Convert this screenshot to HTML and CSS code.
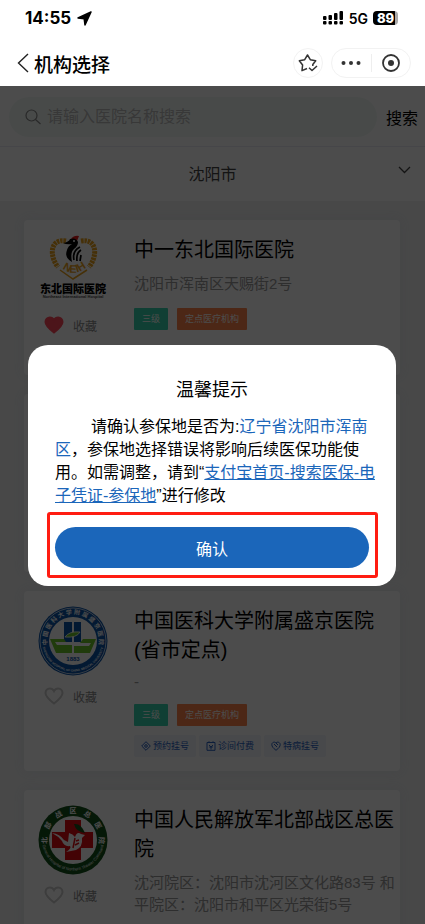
FILE: index.html
```
<!DOCTYPE html>
<html lang="zh-CN">
<head>
    <meta charset="UTF-8">
    <meta name="viewport" content="width=device-width, initial-scale=1.0">
    <title>机构选择</title>
    <link rel="stylesheet" href="styles.css">
</head>
<body>

    <!-- shared icons -->
    <svg class="sprite" aria-hidden="true">
        <symbol id="heart" viewBox="0 0 20 18">
            <path d="M10 16.5C5.500 13 1.500 9.500 1.500 6C1.500 3.300 3.500 1.500 5.800 1.500C7.600 1.500 9.200 2.500 10 4C10.800 2.500 12.400 1.500 14.200 1.500C16.500 1.500 18.500 3.300 18.500 6C18.500 9.500 14.500 13 10 16.500Z"/>
        </symbol>
    </svg>

    <header class="header">
        <div class="status-bar">
            <span class="time">14:55</span>
            <svg class="location" width="15" height="15" viewBox="0 0 15 15"><path d="M14 1L1 7L7.200 7.800L8 14Z" stroke="#000" stroke-width="1.500" stroke-linejoin="round"/></svg>
            <svg class="signal" width="20" height="14" viewBox="0 0 20 14">
                <g fill="#000">
                    <rect x="0" y="5" width="3.500" height="4" rx="1"/><rect x="0" y="10" width="3.500" height="3.500" rx="1"/>
                    <rect x="5.500" y="4" width="3.500" height="5" rx="1"/><rect x="5.500" y="10" width="3.500" height="3.500" rx="1"/>
                    <rect x="11" y="2" width="3.500" height="7" rx="1"/><rect x="11" y="10" width="3.500" height="3.500" rx="1"/>
                    <rect x="16.500" y="0" width="3.500" height="9" rx="1"/><rect x="16.500" y="10" width="3.500" height="3.500" rx="1"/>
                </g>
            </svg>
            <span class="network">5G</span>
            <span class="battery">89</span>
        </div>
        <nav class="nav-bar">
            <button class="back" type="button" aria-label="返回">
                <svg width="12" height="20" viewBox="0 0 12 20"><path d="M11 1L1.500 10L11 19" fill="none" stroke="#222" stroke-width="1.400"/></svg>
            </button>
            <h1>机构选择</h1>
            <button class="star" type="button" aria-label="收藏小程序">
                <svg width="20" height="20" viewBox="0 0 20 20" fill="none" stroke="#333" stroke-width="1.500" stroke-linejoin="round">
                    <path d="M9 15.500L4 17.600L4.600 12L1.300 7.800L6.700 6.700L9.500 2L12.300 6.700L17.700 7.800L14.800 11.500V13"/>
                    <path d="M11 14.800L14 17.500L19 13"/>
                </svg>
            </button>
            <div class="capsule">
                <button type="button" aria-label="更多">
                    <svg width="20" height="6" viewBox="0 0 20 6" fill="#333"><circle cx="2.500" cy="3" r="2"/><circle cx="10" cy="3" r="2"/><circle cx="17.500" cy="3" r="2"/></svg>
                </button>
                <button type="button" aria-label="关闭">
                    <svg width="18" height="18" viewBox="0 0 18 18"><circle cx="9" cy="9" r="8" fill="none" stroke="#333" stroke-width="1.800"/><circle cx="9" cy="9" r="3" fill="#333"/></svg>
                </button>
            </div>
        </nav>
    </header>

    <form class="search">
        <label class="search-box">
            <svg width="16" height="16" viewBox="0 0 16 16" fill="none" stroke="#888" stroke-width="1.200"><circle cx="6.500" cy="6.500" r="5.500"/><path d="M10.500 10.500L15.500 15"/></svg>
            <input type="text" placeholder="请输入医院名称搜索" aria-label="医院名称">
        </label>
        <button type="button">搜索</button>
    </form>

    <button class="city" type="button">
        <span>沈阳市</span>
        <svg width="13" height="8" viewBox="0 0 13 8"><path d="M1 1L6.500 6.500L12 1" fill="none" stroke="#444" stroke-width="1.300"/></svg>
    </button>

    <main class="list">
        <article class="card">
            <div class="side">
                <svg class="logo" viewBox="0 0 70 70">
                    <g fill="none" stroke="#e9a11c" stroke-width="5" stroke-dasharray="2.500 .8">
                        <path d="M28 6C12 3 11 21 20 32"/>
                        <path d="M43 6C59 3 60 21 51 32"/>
                    </g>
                    <path d="M22 35L35 44L49 35" fill="none" stroke="#e9a11c" stroke-width="1.500"/>
                    <path id="neih" d="M20 29Q35 47 53 28" fill="none"/>
                    <text font-size="11" font-weight="700" fill="#e9a11c" text-anchor="middle"><textPath href="#neih" startOffset="50%">NEIH</textPath></text>
                    <path d="M33 4Q36 0 41 1L39 6Z" fill="#e31919"/>
                    <path d="M25 8Q31 7 32 4Q38 2 40 7Q40 11 36 14Q32 17 34 27Q26 23 29 15Q30 11 34 9Q29 10 25 8Z"/>
                    <path d="M42 12Q34 16 36 25M43 15Q38 18 39 26M43 20L42 26" fill="none" stroke="#000" stroke-width="1.700"/>
                    <circle cx="36" cy="6" r="1" fill="#fff"/>
                    <text x="35" y="58" text-anchor="middle" font-size="11" font-weight="900">东北国际医院</text>
                    <text x="35" y="63" text-anchor="middle" font-size="4" font-weight="700" fill="#444">Northeast International Hospital</text>
                </svg>
                <button class="favorite active" type="button"><svg><use href="#heart"/></svg>收藏</button>
            </div>
            <div class="info">
                <h2>中一东北国际医院</h2>
                <p class="address">沈阳市浑南区天赐街2号</p>
                <div class="tags"><span class="level">三级</span><span class="insured">定点医疗机构</span></div>
                <div class="services"></div>
            </div>
        </article>

        <article class="card"></article>

        <article class="card">
            <div class="side">
                <svg class="logo" viewBox="0 0 70 70">
                    <circle cx="35" cy="35" r="34.500" fill="#0c54a8"/>
                    <circle cx="35" cy="35" r="33" fill="none" stroke="#fff" stroke-width=".7"/>
                    <circle cx="35" cy="35" r="24" fill="#fff"/>
                    <path id="ring-top" d="M10.500 43A26 26 0 1 1 59.500 43" fill="none"/>
                    <path id="ring-bottom" d="M4.500 40A31 31 0 0 0 65.500 40" fill="none"/>
                    <text font-size="6" font-weight="700" fill="#fff" text-anchor="middle"><textPath href="#ring-top" startOffset="50%">中 国 医 科 大 学 附 属 盛 京 医 院</textPath></text>
                    <g font-size="3" font-weight="700" fill="#fff" text-anchor="middle">
                        <text><textPath href="#ring-bottom" startOffset="21%">SHENGJING HOSPITAL</textPath></text>
                        <text><textPath href="#ring-bottom" startOffset="50%">OF CHINA</textPath></text>
                        <text><textPath href="#ring-bottom" startOffset="79%">MEDICAL UNIVERSITY</textPath></text>
                    </g>
                    <path d="M26 16H34V36H26ZM36 16H43V36H36Z" fill="#0c54a8"/>
                    <path d="M27 31Q31 25 42 26Q39 32 27 31Z" fill="#6dc52b" stroke="#fff" stroke-width=".8"/>
                    <path d="M12 33H26L28 36H17L19 39H34V47H18ZM58 33H45L42 37H53L51 40H36V47H52Z" fill="#6dc52b"/>
                    <text x="35" y="55" text-anchor="middle" font-size="6" font-weight="700" fill="#0c54a8">1883</text>
                </svg>
                <button class="favorite" type="button"><svg><use href="#heart"/></svg>收藏</button>
            </div>
            <div class="info">
                <h2>中国医科大学附属盛京医院(省市定点)</h2>
                <p class="address empty">-</p>
                <div class="tags"><span class="level">三级</span><span class="insured">定点医疗机构</span></div>
                <div class="services">
                    <a href="#"><svg viewBox="0 0 10 10"><path d="M5 .7L9.300 5L5 9.300L.7 5Z"/><circle cx="5" cy="5" r="1.300"/></svg>预约挂号</a>
                    <a href="#"><svg viewBox="0 0 10 10"><path d="M1 1.500H9V9.300H1ZM3 .3V2M7 .3V2M3 4L5 6L7 4M5 6V8.500M3.200 6H6.800"/></svg>诊间付费</a>
                    <a href="#"><svg viewBox="0 0 10 10"><path d="M5 9.300C2 7 .8 5.500 .8 3.500C.8 1.500 3.500 .2 5 2C6.500 .2 9.200 1.500 9.200 3.500C9.200 5.500 8 7 5 9.300ZM3 3L6 6M5 2L7 4"/></svg>特病挂号</a>
                </div>
            </div>
        </article>

        <article class="card">
            <div class="side">
                <svg class="logo" viewBox="0 0 70 70">
                    <circle cx="35" cy="35" r="34.500" fill="#12501a"/>
                    <circle cx="35" cy="35" r="24" fill="#fff"/>
                    <path id="north-top" d="M9.500 39A26 26 0 1 1 60.500 39" fill="none"/>
                    <path id="north-bottom" d="M4.500 40A31 31 0 0 0 65.500 40" fill="none"/>
                    <text font-size="7" font-weight="700" fill="#fff" text-anchor="middle"><textPath href="#north-top" startOffset="50%">北　部　战　区　总　医　院</textPath></text>
                    <text font-size="4" fill="#fff" text-anchor="middle"><textPath href="#north-bottom" startOffset="50%">General Hospital of Northern Theater Command</textPath></text>
                    <path d="M27 15H43V27H55V43H43V55H27V43H14V27H27Z" fill="#e00a12"/>
                    <path d="M14 28Q22 29 26 35L30 37L31 28Q35 29 37 32Q39 26 43 29L47 30L44 33Q45 42 38 45L28 47Q34 43 32 41Q26 42 24 36Q20 31 14 28Z" fill="#fff"/>
                    <path d="M37 33L35 43M38 36L41 35M37 40L41 38" fill="none" stroke="#e00a12" stroke-width="1.500"/>
                    <path d="M36 19Q43 18 47 28Q38 27 36 19Z" fill="#12501a"/>
                </svg>
                <button class="favorite" type="button"><svg><use href="#heart"/></svg>收藏</button>
            </div>
            <div class="info">
                <h2>中国人民解放军北部战区总医院</h2>
                <p class="address">沈河院区：沈阳市沈河区文化路83号 和平院区：沈阳市和平区光荣街5号</p>
            </div>
        </article>
    </main>

    <div class="mask">
        <section class="dialog" role="dialog" aria-labelledby="dialog-title">
            <h2 id="dialog-title">温馨提示</h2>
            <p>请确认参保地是否为:<span>辽宁省沈阳市浑南<br>区</span>，参保地选择错误将影响后续医保功能使<br>用。如需调整，请到“<a href="#">支付宝首页-搜索医保-电<br>子凭证-参保地</a>”进行修改</p>
            <div class="highlight">
                <button type="button">确认</button>
            </div>
        </section>
    </div>

</body>
</html>
```
FILE: styles.css
```
* {
    box-sizing: border-box;
}
body {
    margin: 0;
    height: 100vh;
    overflow: hidden;
    background-color: #f0f0f0;
    color: #000;
    font-family: "Liberation Sans", "Noto Sans CJK SC", sans-serif;
}
h1, h2, p {
    margin: 0;
    font-weight: 400;
}
button {
    padding: 0;
    border: none;
    background: none;
    color: inherit;
    font-family: inherit;
    cursor: pointer;
}
svg {
    display: block;
    flex-shrink: 0;
}
.sprite {
    position: absolute;
    width: 0;
    height: 0;
}

/* header */
.header {
    position: relative;
    z-index: 2;
    height: 86px;
    background-color: #fff;
}
.status-bar {
    display: flex;
    align-items: center;
    height: 36px;
    padding: 0 27px 0 25px;
    font-family: Inter, sans-serif;
}
.time {
    font-size: 17px;
    font-weight: 700;
}
.location {
    margin-left: 6px;
}
.signal {
    margin-left: auto;
}
.network {
    margin: 0 5px 0 6px;
    font-size: 14px;
    font-weight: 600;
}
.battery {
    width: 25px;
    border-radius: 4px;
    background: linear-gradient(90deg, #000 89%, #aaa 89%);
    color: #fff;
    font-size: 13px;
    font-weight: 800;
    line-height: 14px;
    text-align: center;
}
.nav-bar {
    display: flex;
    align-items: center;
    height: 50px;
    padding: 4px 14px 0 17px;
}
.nav-bar h1 {
    margin: 0 auto 0 5px;
    font-size: 19px;
    font-weight: 500;
}
.star, .capsule {
    display: flex;
    align-items: center;
    justify-content: center;
    height: 30px;
    border: 1px solid #f2f2f2;
    border-radius: 15px;
}
.star {
    width: 30px;
    margin-right: 8px;
}
.capsule {
    width: 80px;
}
.capsule button {
    display: flex;
    flex: 1;
    align-items: center;
    justify-content: center;
    height: 18px;
}
.capsule button + button {
    border-left: 1px solid #eee;
}

/* search and city */
.search {
    display: flex;
    align-items: center;
    height: 61px;
    padding: 2px 7px 0 9px;
    border-bottom: 1px solid #eaeaf4;
    background-color: #fff;
}
.search-box {
    display: flex;
    flex: 1;
    align-items: center;
    gap: 6px;
    height: 40px;
    margin-right: 9px;
    padding: 0 16px;
    border-radius: 20px;
    background-color: #f2f9f6;
}
.search-box input {
    flex: 1;
    min-width: 0;
    padding: 0;
    border: none;
    outline: none;
    background: none;
    font-family: inherit;
    font-size: 16px;
}
.search-box input::placeholder {
    color: #bbb;
}
.search button {
    font-size: 16px;
}
.city {
    display: flex;
    align-items: center;
    width: 100%;
    height: 54px;
    padding: 0 14px 2px 27px;
    background-color: #fff;
    color: #444;
    font-size: 16px;
}
.city span {
    flex: 1;
}
.city svg {
    margin-bottom: 6px;
}

/* hospital list */
.list {
    display: flex;
    flex-direction: column;
    gap: 19px;
    padding: 19px 25px 19px 24px;
}
.card {
    display: flex;
    flex-shrink: 0;
    gap: 26px;
    min-height: 155px;
    padding: 15px 0 14px 14px;
    border-radius: 4px;
    background-color: #fff;
    box-shadow: 0 0 12px #e4ecee;
}
.card:empty {
    min-height: 178px;
}
.side {
    width: 70px;
}
.logo {
    width: 70px;
    height: 70px;
}
.favorite {
    display: flex;
    align-items: center;
    gap: 9px;
    height: 18px;
    margin: 11px 0 0 6px;
    color: #888;
    font-size: 12px;
}
.favorite svg {
    width: 20px;
    height: 18px;
    fill: none;
    stroke: #ccc;
    stroke-width: 2;
}
.favorite.active svg {
    fill: #ff4658;
    stroke: #ff4658;
}
.info {
    flex: 1;
    min-width: 0;
    padding-top: 1px;
}
.info h2 {
    font-size: 20px;
    line-height: 29px;
}
.address {
    margin-top: 8px;
    color: #999;
    font-size: 15px;
    line-height: 22px;
}
.address.empty {
    line-height: 18px;
}
.tags {
    display: flex;
    gap: 9px;
    margin-top: 13px;
    color: #fff;
    font-size: 9px;
    line-height: 22px;
}
.tags span {
    padding: 0 8px;
    border-radius: 1px;
}
.level {
    background-color: #37d3ad;
}
.insured {
    background-color: #ff834a;
}
.services {
    display: flex;
    gap: 3px;
    margin-top: 9px;
}
.services a {
    display: flex;
    align-items: center;
    gap: 2px;
    padding: 0 7px;
    border-radius: 2px;
    background-color: #f0f4fa;
    color: #2a62c4;
    font-size: 9px;
    line-height: 22px;
    text-decoration: none;
}
.services svg {
    width: 10px;
    height: 10px;
    fill: none;
    stroke: #2a62c4;
}

/* confirm dialog */
.mask {
    position: fixed;
    inset: 0;
    z-index: 1;
    display: flex;
    align-items: center;
    padding: 7px 29px 0 28px;
    background-color: rgba(0, 0, 0, 0.7);
}
.dialog {
    width: 100%;
    padding: 33px 27px 8px;
    border-radius: 20px;
    background-color: #fff;
}
.dialog h2 {
    font-size: 18px;
    line-height: 24px;
    text-align: center;
}
.dialog p {
    margin-top: 13px;
    font-size: 16px;
    line-height: 23px;
    text-indent: 36px;
    white-space: nowrap;
}
.dialog span, .dialog a {
    color: #1b66ba;
}
.highlight {
    margin: 5px -9px 0 -8px;
    padding: 12px 6px 7px 5px;
    border: 3px solid #ff1c12;
    border-radius: 3px;
}
.highlight button {
    display: block;
    width: 100%;
    height: 41px;
    border-radius: 21px;
    background-color: #1b66ba;
    color: #fff;
    font-size: 16px;
}
```
